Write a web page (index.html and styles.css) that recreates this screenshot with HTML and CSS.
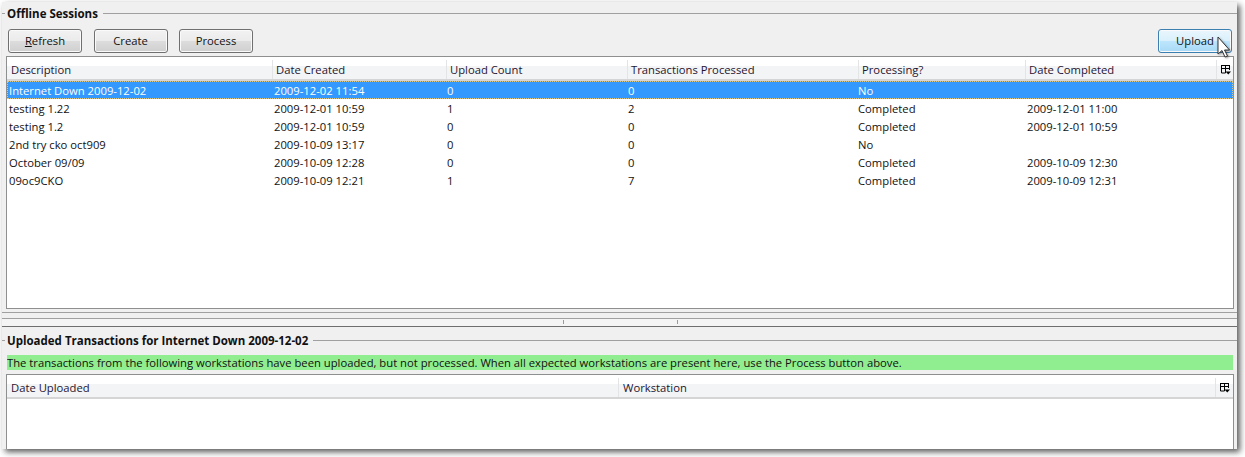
FILE: index.html
```html
<!DOCTYPE html>
<html lang="en">
<head>
  <meta charset="UTF-8" />
  <title>Offline Sessions</title>
  <link rel="stylesheet" href="styles.css">
</head>
<body>
  <div class="window">
    <div class="group-title top-title"><span class="tick"></span><b>Offline Sessions</b><span class="rule"></span></div>
    <div class="toolbar">
      <button class="btn"><u>R</u>efresh</button>
      <button class="btn">Create</button>
      <button class="btn">Process</button>
      <button class="btn hover">Upload</button>
    </div>

    <div class="table sessions">
      <div class="thead">
        <div class="th">Description</div>
        <div class="th">Date Created</div>
        <div class="th">Upload Count</div>
        <div class="th">Transactions Processed</div>
        <div class="th">Processing?</div>
        <div class="th">Date Completed</div>
        <div class="th picker">
          <svg width="10" height="10" viewBox="0 0 10 10"><path d="M0 .5h9M0 3.500h9M.5 0v8h4M4.500 0v8M8.500 0v5" fill="none" stroke="#000"/><path d="M4.500 6.500h5.500l-2.750 3z" fill="#000"/></svg>
        </div>
      </div>
      <div class="row selected">
        <div>Internet Down 2009-12-02</div><div>2009-12-02 11:54</div><div>0</div><div>0</div><div>No</div><div></div>
      </div>
      <div class="row">
        <div>testing 1.22</div><div>2009-12-01 10:59</div><div>1</div><div>2</div><div>Completed</div><div>2009-12-01 11:00</div>
      </div>
      <div class="row">
        <div>testing 1.2</div><div>2009-12-01 10:59</div><div>0</div><div>0</div><div>Completed</div><div>2009-12-01 10:59</div>
      </div>
      <div class="row">
        <div>2nd try cko oct909</div><div>2009-10-09 13:17</div><div>0</div><div>0</div><div>No</div><div></div>
      </div>
      <div class="row">
        <div>October 09/09</div><div>2009-10-09 12:28</div><div>0</div><div>0</div><div>Completed</div><div>2009-10-09 12:30</div>
      </div>
      <div class="row">
        <div>09oc9CKO</div><div>2009-10-09 12:21</div><div>1</div><div>7</div><div>Completed</div><div>2009-10-09 12:31</div>
      </div>
    </div>

    <div class="splitter">
      <span class="grip"></span><span class="grip"></span>
    </div>

    <div class="group-title lower-title"><span class="tick"></span><b>Uploaded Transactions for Internet Down 2009-12-02</b><span class="rule"></span></div>
    <div class="notice">The transactions from the following workstations have been uploaded, but not processed. When all expected workstations are present here, use the Process button above.</div>

    <div class="table uploads">
      <div class="thead">
        <div class="th">Date Uploaded</div>
        <div class="th">Workstation</div>
        <div class="th picker">
          <svg width="10" height="10" viewBox="0 0 10 10"><path d="M0 .5h9M0 3.500h9M.5 0v8h4M4.500 0v8M8.500 0v5" fill="none" stroke="#000"/><path d="M4.500 6.500h5.500l-2.750 3z" fill="#000"/></svg>
        </div>
      </div>
    </div>

    <svg class="cursor" width="14" height="22" viewBox="0 0 14 22"><path d="M1 1v17l4-3.500 3 6.500 2.500-1-3-6h5z" fill="#fff" stroke="#333" stroke-linejoin="round"/></svg>
  </div>
</body>
</html>
```

FILE: styles.css
```css
html, body { margin: 0; background: #fff; }
body {
  box-sizing: border-box; height: 457px; padding: 2px 0 0 2px; overflow: hidden;
  font-family: "Open Sans", "Noto Sans", sans-serif; font-size: 11.25px; color: #111;
}

.window {
  position: relative;
  width: 1235px; height: 447px;
  background: #f0f0f0;
  box-shadow: 3px 3px 6px rgba(0,0,0,.65);
}

.group-title { display: flex; align-items: center; gap: 5px; height: 16px; }
.group-title b { font-size: 11.5px; font-weight: 700; color: #111; white-space: nowrap; }
.group-title .tick { width: 3px; height: 1px; background: #a0a0a0; margin-right: -3px; }
.group-title .rule { flex: 1; height: 1px; background: #a0a0a0; }
.top-title { padding-top: 3px; }

.toolbar { display: flex; gap: 11.5px; margin: 8px 5px 0 6px; }
.btn {
  width: 74px; height: 24px; padding: 0 0 2px;
  font: 11.25px "Open Sans", "Noto Sans", sans-serif; color: #111;
  border: 1px solid #707070; border-radius: 3px;
  background: linear-gradient(#f2f2f2 0, #ebebeb 48%, #dddddd 50%, #cfcfcf 100%);
  box-shadow: inset 0 0 0 1px #fafafa;
}
.btn.hover {
  margin-left: auto;
  border-color: #3c7fb1;
  background: linear-gradient(#eaf6fd 0, #d9f0fc 48%, #bee6fd 50%, #a7d9f5 100%);
}

.table { margin: 3px 3px 0 4px; background: #fff; border: 1px solid #8e8f8f; box-sizing: border-box; }
.sessions { height: 253px; }
.uploads { height: 75px; margin-top: 4px; border-bottom: none; }

.thead {
  display: grid; height: 24px; box-sizing: border-box;
  border-bottom: 2px solid #d5d5d5;
  padding-top: 3px;
  background: linear-gradient(#fff 0, #fff 40%, #f3f4f6 41%, #f3f4f6 100%);
}
.sessions .thead { grid-template-columns: 266px 174px 181px 231px 167px 191px 1fr; }
.uploads .thead { grid-template-columns: 612px 597px 1fr; }
.th {
  display: flex; align-items: center; padding-left: 3px;
  border-right: 1px solid #e3e4e6; color: #1e1430;
}
.th:first-child { padding-left: 4px; }
.uploads .th { padding-left: 4px; }
.th.picker { border-right: none; padding-left: 4px; }

.row {
  display: grid; height: 18px; align-items: center; padding-left: 2px;
  grid-template-columns: 265px 173px 181px 230px 169px 1fr;
  white-space: nowrap;
}
.row.selected { background: #3399ff; color: #fff; outline: 1px dotted #d8c98a; outline-offset: -1px; }

.splitter {
  display: flex; justify-content: center; gap: 113px; box-sizing: border-box;
  height: 15px; margin-top: 3px;
  border-top: 1px solid #a0a0a0; border-bottom: 1px solid #6e6e6e;
  background: linear-gradient(#f0f0f0 5px, #a0a0a0 5px, #a0a0a0 6px, #f4f4f4 6px);
  padding: 7px 0 0 2px;
}
.grip { width: 1px; height: 4px; background: #9a9a9a; }

.lower-title { margin-top: 5px; }
.notice {
  margin: 7px 4px 0 5px; height: 15px; line-height: 15px;
  background: #90ee90; color: #111; white-space: nowrap; overflow: hidden;
}

.cursor { position: absolute; left: 1215px; top: 34px; filter: drop-shadow(1px 1px 1px rgba(0,0,0,.4)); }
```
